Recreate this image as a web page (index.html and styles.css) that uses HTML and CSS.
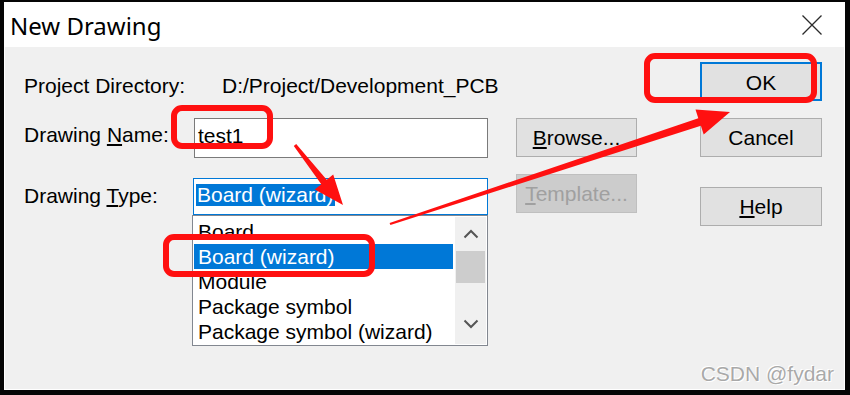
FILE: index.html
```html
<!DOCTYPE html>
<html>
  <head>
    <link rel="stylesheet" href="styles.css">
  </head>
  <body>
    <div id="dialog">
      <div id="titlebar">
        <span id="title">New Drawing</span>
        <svg id="close" width="20" height="20" viewBox="0 0 20 20">
          <path d="M0.5 0.5 L19.5 19.5 M19.5 0.5 L0.5 19.5" stroke="#2b2b2b" stroke-width="1.3" fill="none"/>
        </svg>
      </div>
      <div id="content">
        <div id="form">
          <div class="label row1">Project Directory:</div>
          <div class="value">D:/Project/Development_PCB</div>
          <button class="btn btn-ok">OK</button>

          <div class="label row2">Drawing <u>N</u>ame:</div>
          <div class="input">test1</div>
          <button class="btn btn-browse"><u>B</u>rowse...</button>
          <button class="btn btn-cancel">Cancel</button>

          <div class="label row3">Drawing <u>T</u>ype:</div>
          <div class="combo-wrap">
            <div class="combo"><span class="combo-sel">Board (wizard)</span></div>
            <div class="list">
              <div class="rows">
                <div class="item">Board</div>
                <div class="item selected">Board (wizard)</div>
                <div class="item">Module</div>
                <div class="item">Package symbol</div>
                <div class="item">Package symbol (wizard)</div>
              </div>
              <div class="scrollbar">
                <div class="sb-up">
                  <svg width="16" height="10" viewBox="0 0 16 10"><path d="M1.5 8.5 L8 2 L14.5 8.5" stroke="#555" stroke-width="2" fill="none"/></svg>
                </div>
                <div class="sb-thumb"></div>
                <div class="sb-down">
                  <svg width="16" height="10" viewBox="0 0 16 10"><path d="M1.5 1.5 L8 8 L14.5 1.5" stroke="#555" stroke-width="2" fill="none"/></svg>
                </div>
              </div>
            </div>
          </div>
          <button class="btn btn-template" disabled><u>T</u>emplate...</button>
          <button class="btn btn-help"><u>H</u>elp</button>
        </div>
        <div id="watermark">CSDN @fydar</div>
      </div>
    </div>

    <svg id="marks" width="850" height="395" viewBox="0 0 850 395">
      <g fill="none" stroke="#ff1010" stroke-width="6">
        <rect x="174" y="108" width="96" height="38" rx="8"/>
        <rect x="166" y="237" width="206" height="37" rx="8"/>
        <rect x="647" y="56" width="167" height="44" rx="8"/>
      </g>
      <g fill="#ff1010">
        <polygon points="296.2,144 326.7,179.8 333.2,174.4 343,205 314.8,189.6 321.3,184.2 293.8,146"/>
        <polygon points="389.6,222.9 698.3,118.2 695.5,109.6 730,112 703.7,134.4 700.9,125.8 390.4,225.1"/>
      </g>
    </svg>
  </body>
</html>
```
FILE: styles.css
```css
body {
  margin: 0;
  width: 850px;
  height: 395px;
  background: #050505;
  font-family: "Liberation Sans", Arial, sans-serif;
  overflow: hidden;
}

#dialog {
  margin: 2px 5px 5px 4px;
  width: 841px;
  height: 388px;
  box-sizing: border-box;
  border: 1px solid #fff;
  background: #f0f0f0;
  display: flex;
  flex-direction: column;
}

#titlebar {
  height: 44px;
  background: #fff;
  display: flex;
  align-items: center;
  justify-content: space-between;
  padding: 0 22px 0 5px;
}

#title {
  font-family: "Noto Sans", "Open Sans", sans-serif;
  font-size: 24px;
  color: #000;
}

#content {
  flex: 1;
  display: flex;
  flex-direction: column;
}

#form {
  display: grid;
  grid-template-columns: 169px 295px 28px 121px 63px 122px;
  grid-template-rows: 56px 56px auto;
  align-items: start;
  padding: 15px 0 0 19px;
  font-size: 21px;
  color: #000;
}

.label {
  grid-column: 1;
  line-height: 24px;
  white-space: nowrap;
}

.label.row1 { margin-top: 12px; }
.label.row2 { margin-top: 5px; }
.label.row3 { margin-top: 10px; }

.value {
  grid-column: 2 / span 3;
  line-height: 24px;
  margin-top: 12px;
  padding-left: 29px;
  white-space: nowrap;
}

.btn {
  height: 39px;
  box-sizing: border-box;
  border: 1px solid #adadad;
  background: #e1e1e1;
  font-family: inherit;
  font-size: 21px;
  color: #000;
  padding: 0;
  line-height: 37px;
}

.btn-ok {
  grid-column: 6;
  border: 2px solid #0078d7;
}

.btn-browse { grid-column: 4; }
.btn-cancel { grid-column: 6; }

.btn-template {
  grid-column: 4;
  background: #cccccc;
  border-color: #bfbfbf;
  color: #a0a0a0;
}

.btn-help {
  grid-column: 6;
  margin-top: 13px;
}

.input {
  grid-column: 2;
  margin-left: 1px;
  height: 40px;
  box-sizing: border-box;
  border: 1px solid #7a7a7a;
  background: #fff;
  padding-left: 3px;
  line-height: 34px;
}

.combo-wrap {
  grid-column: 2;
  display: flex;
  flex-direction: column;
  margin-top: 4px;
}

.combo {
  height: 37px;
  box-sizing: border-box;
  border: 1px solid #0078d7;
  background: #fff;
  padding: 4px 0 0 2px;
}

.combo-sel {
  display: inline-block;
  background: #0078d7;
  color: #fff;
  line-height: 22px;
  padding: 0 1px;
}

.list {
  margin-left: -1px;
  height: 131px;
  box-sizing: border-box;
  border: 1px solid #828790;
  background: #fff;
  padding: 1px;
  display: flex;
  gap: 2px;
}

.rows {
  flex: 1;
  padding-top: 2px;
  overflow: hidden;
}

.item {
  height: 25px;
  line-height: 25px;
  padding-left: 4px;
  white-space: nowrap;
}

.item.selected {
  background: #0078d7;
  color: #fff;
}

.scrollbar {
  width: 31px;
  background: #f0f0f0;
  display: flex;
  flex-direction: column;
}

.sb-up {
  height: 33px;
  display: flex;
  align-items: center;
  justify-content: center;
}

.sb-thumb {
  height: 32px;
  margin: 1px 1px 0;
  background: #cdcdcd;
}

.sb-down {
  flex: 1;
  display: flex;
  align-items: flex-end;
  justify-content: center;
  padding-bottom: 15px;
}

#watermark {
  margin-top: auto;
  align-self: flex-end;
  padding: 0 10px 4px 0;
  font-size: 21px;
  line-height: 22px;
  color: #a9a9a9;
  text-shadow: 1px 1px 0 #fff, -1px -1px 0 #fff;
}

#marks {
  position: absolute;
  top: 0;
  left: 0;
  pointer-events: none;
}
```
